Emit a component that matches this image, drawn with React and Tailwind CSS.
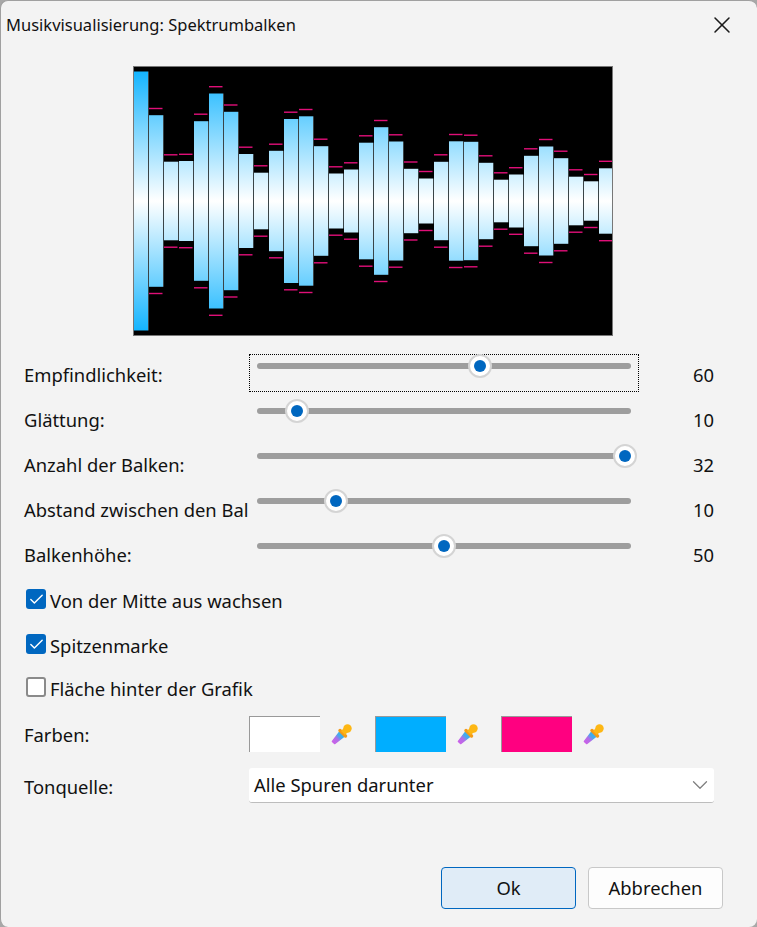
import { X, ChevronDown, Check } from "lucide-react"

const font = "font-['Noto_Sans',sans-serif]"

// half heights of bars and peaks, px from the centre line
const bars = [
  [129.5, 0], [85.8, 92.5], [39.3, 46.2], [40, 46.7], [79.8, 86.8], [107.5, 114.3], [89.2, 96], [47, 53.8],
  [28.3, 35.2], [50.2, 56.8], [82, 88.8], [84.7, 91.5], [54.8, 61.8], [27.5, 34.2], [31.5, 38.2], [58.3, 65.2],
  [73.8, 80.5], [59.5, 66.2], [32.2, 39], [22.5, 29.5], [39.2, 46.2], [59.7, 66.5], [59.2, 65.8], [38.2, 45.2],
  [21.3, 28.2], [26.5, 33.3], [45.2, 52.2], [54.5, 61.5], [42.8, 49.8], [24.3, 31.2], [19.7, 26.5], [32.7, 39.7],
]

const sliders = [
  { label: "Empfindlichkeit:", value: 60, thumb: 230, focused: true },
  { label: "Glättung:", value: 10, thumb: 47 },
  { label: "Anzahl der Balken:", value: 32, thumb: 375 },
  { label: "Abstand zwischen den Bal", value: 10, thumb: 86 },
  { label: "Balkenhöhe:", value: 50, thumb: 194 },
]

function Spectrum() {
  return (
    <div className="ml-[132px] h-[270px] w-[480px] border border-[#777777] bg-black">
      <svg width="478" height="268" viewBox="0 0 478 268" className="block">
        <defs>
          <linearGradient id="barFill" gradientUnits="userSpaceOnUse" x1="0" y1="0" x2="0" y2="268">
            <stop offset="0" stopColor="#0cb2ff" />
            <stop offset="0.5" stopColor="#ffffff" />
            <stop offset="1" stopColor="#0cb2ff" />
          </linearGradient>
        </defs>
        {bars.map(([h, peak], i) => (
          <g key={i}>
            <rect x={i * 15} y={134 - h} width="14" height={h * 2} fill="url(#barFill)" />
            {i < 31 && <rect x={i * 15 + 14} y={134 - h} width="1" height={h * 2} fill="#3a4448" />}
            {peak > 0 && (
              <>
                <rect x={i * 15} y={134 - peak - 0.7} width="13.5" height="1.4" fill="#e00f78" />
                <rect x={i * 15} y={134 + peak - 0.7} width="13.5" height="1.4" fill="#e00f78" />
              </>
            )}
          </g>
        ))}
      </svg>
    </div>
  )
}

function SliderRow({ label, value, thumb, focused }) {
  return (
    <div className="flex h-[45px] items-center">
      <div className="ml-[23px] w-[225px] shrink-0 whitespace-nowrap pb-[3px]">{label}</div>
      <div
        className={`relative h-[38px] w-[390px] shrink-0 self-start border border-dotted ${
          focused ? "border-black" : "border-transparent"
        }`}
      >
        <div className="mx-[7px] mt-[8px] h-[6px] rounded-full bg-[#9d9d9d]" />
        <div
          className="absolute top-[-1px] flex h-[24px] w-[24px] -translate-x-1/2 items-center justify-center rounded-full border-2 border-[#d4d4d4] bg-white"
          style={{ left: thumb }}
        >
          <div className="h-[12px] w-[12px] rounded-full bg-[#0067c0]" />
        </div>
      </div>
      <div className="ml-[50px] w-[25px] shrink-0 pb-[3px] text-right">{value}</div>
    </div>
  )
}

function CheckRow({ label, checked, className }) {
  return (
    <div className={`ml-[25px] flex h-5 items-center gap-1 ${className}`}>
      {checked ? (
        <div className="flex h-5 w-5 items-center justify-center rounded-[3px] bg-[#0067c0]">
          <Check className="h-[17px] w-[17px] text-white" strokeWidth={2} />
        </div>
      ) : (
        <div className="h-5 w-5 rounded-[3px] border-2 border-[#8a8a8a] bg-white" />
      )}
      <span className="whitespace-nowrap pt-1">{label}</span>
    </div>
  )
}

function Pipette({ id }) {
  return (
    <svg width="22" height="22" viewBox="0 0 22 22" className="ml-[11px] shrink-0">
      <defs>
        <linearGradient id={id} gradientUnits="userSpaceOnUse" x1="2" y1="20" x2="12" y2="10">
          <stop offset="0" stopColor="#cc5fe8" />
          <stop offset="0.4" stopColor="#b06ee8" />
          <stop offset="0.65" stopColor="#4aa8ec" />
          <stop offset="1" stopColor="#28b6ee" />
        </linearGradient>
      </defs>
      <path
        d="M1.4 18.4 L8.8 8.8 L13.2 13.2 L3.6 20.6 Z"
        fill={`url(#${id})`}
        stroke={`url(#${id})`}
        strokeWidth="1.4"
        strokeLinejoin="round"
      />
      <path d="M9 7.5 L14.5 13" stroke="#f39a18" strokeWidth="3.4" strokeLinecap="round" />
      <circle cx="16.5" cy="5.5" r="4.2" fill="#fdb714" />
      <path d="M11.5 6.5 L15.5 10.5" stroke="#fdb714" strokeWidth="4.5" />
    </svg>
  )
}

function Swatch({ color, id, className }) {
  return (
    <div className={`flex items-center ${className}`}>
      <div className={`h-[36px] w-[71px] border-l border-t border-[#999999] ${color}`} />
      <Pipette id={id} />
    </div>
  )
}

export default function App() {
  return (
    <div className="h-[927px] w-[757px] bg-[#a8a8a8]">
      <div
        className={`h-[927px] w-[757px] overflow-hidden rounded-[8px] border-l border-t border-[#a0a0a0] bg-[#f3f3f3] text-[18.4px] leading-6 text-[#111111] ${font}`}
      >
        <div className="flex h-[65px] items-start justify-between">
          <div className="ml-[5px] mt-[12px] text-[16.5px]">Musikvisualisierung: Spektrumbalken</div>
          <X className="mr-[21px] mt-[10px] h-[28px] w-[28px] text-[#1a1a1a]" strokeWidth={1.3} />
        </div>
        <Spectrum />
        <div className="mt-[18px]">
          {sliders.map((s) => (
            <SliderRow key={s.label} {...s} />
          ))}
        </div>
        <CheckRow className="mt-[10px]" label="Von der Mitte aus wachsen" checked />
        <CheckRow className="mt-[25px]" label="Spitzenmarke" checked />
        <CheckRow className="mt-[23px]" label="Fläche hinter der Grafik" />
        <div className="mt-[19px] flex h-[36px] items-center">
          <div className="ml-[23px] w-[225px] pt-[2px]">Farben:</div>
          <Swatch color="bg-white" id="p1" />
          <Swatch color="bg-[#00aeff]" id="p2" className="ml-[22px]" />
          <Swatch color="bg-[#ff0080]" id="p3" className="ml-[22px]" />
        </div>
        <div className="mt-4 flex h-[35px] items-center">
          <div className="ml-[23px] w-[225px] pt-[2px]">Tonquelle:</div>
          <div className="flex h-[35px] w-[465px] items-center justify-between rounded-[3px] border-b border-[#bdbdbd] bg-white pl-[5px] pr-px">
            <span>Alle Spuren darunter</span>
            <ChevronDown className="h-[26px] w-[26px] text-[#808080]" strokeWidth={1.2} />
          </div>
        </div>
        <div className="mr-[34px] mt-16 flex justify-end gap-3">
          <button className="h-[42px] w-[135px] rounded-[4px] border border-[#0067c0] bg-[#e0ecf7]">Ok</button>
          <button className="h-[42px] w-[135px] rounded-[4px] border border-[#c8c8c8] bg-[#fdfdfd]">Abbrechen</button>
        </div>
      </div>
    </div>
  )
}
